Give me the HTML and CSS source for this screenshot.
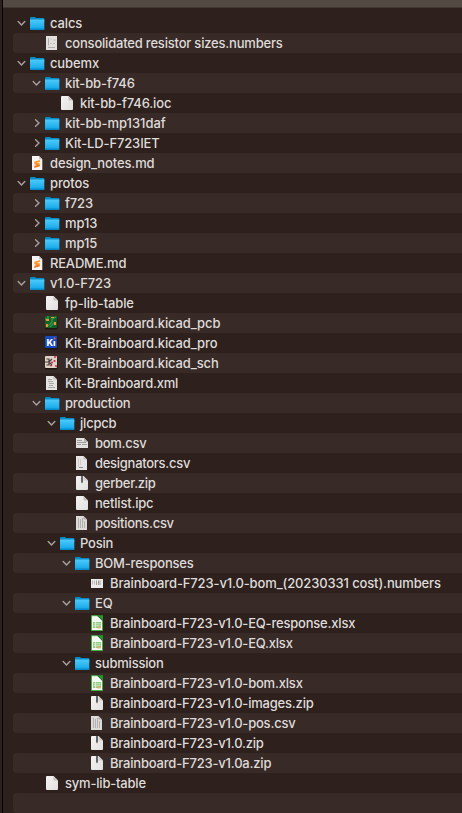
FILE: index.html
```html
<!DOCTYPE html>
<html lang="en">
<head>
<meta charset="utf-8">
<title>Files</title>
<link rel="stylesheet" href="styles.css">
</head>
<body>
<svg class="defs" width="0" height="0" aria-hidden="true">
  <defs>
    <linearGradient id="blue" x1="0" y1="0" x2="0" y2="1"><stop offset="0" stop-color="#4dcafb"/><stop offset="1" stop-color="#0fa5e9"/></linearGradient>
    <linearGradient id="paper" x1="0" y1="0" x2="1" y2="1"><stop offset="0" stop-color="#f4f3f2"/><stop offset="1" stop-color="#e2e1e0"/></linearGradient>
    <symbol id="open" viewBox="0 0 9 8"><path d="M1.2 2.5L4.5 6L7.8 2.5" fill="none" stroke="#a69e9b" stroke-width="1.5" stroke-linecap="round" stroke-linejoin="round"/></symbol>
    <symbol id="closed" viewBox="0 0 9 8"><path d="M3.6 .8L7 4L3.6 7.2" fill="none" stroke="#a69e9b" stroke-width="1.5" stroke-linecap="round" stroke-linejoin="round"/></symbol>
    <symbol id="folder" viewBox="0 0 15 16"><path d="M0 3Q0 2 1 2H5L6.2 3H13.5Q14.3 3 14.3 4V7H0Z" fill="#078bc5"/><path d="M0 4.5H14.3V14Q14.3 15 13.5 15H1Q0 15 0 14Z" fill="url(#blue)"/><path d="M0 13.6H14.3V14Q14.3 15 13.5 15H1Q0 15 0 14Z" fill="#078cc9"/></symbol>
    <symbol id="file" viewBox="0 0 15 16"><path d="M2 2Q2 1 3 1H9.5L14 5.5V14Q14 15 13 15H3Q2 15 2 14Z" fill="url(#paper)"/><path d="M9.5 1V4.5Q9.5 5.5 10.5 5.5H14Z" fill="#c3c1c0"/></symbol>
    <symbol id="md" viewBox="0 0 15 16"><path d="M2 1H9L12.3 4.3V15H2Z" fill="#f5f4f3"/><path d="M9 1V4.3H12.3Z" fill="#c6c3c1"/><path d="M9.9 5L4.3 6.8V9.2L9.9 11V8.6L7 7.8L9.9 7Z" fill="#ff982c"/><path d="M4.3 8.6L9.9 10.4V11.2L4.3 13V10.8L7.2 10Z" fill="#ed761a"/></symbol>
    <symbol id="sheet" viewBox="0 0 15 16"><path d="M1 1H12V15H1Z" fill="#e3e1df"/><path d="M3.5 3V10.5M8.5 5H10.5M8.5 8.5H10M3 12.5H10" stroke="#b0aca9" fill="none"/><path d="M5 4H7M5 8.5H7" stroke="#c6c2bf"/></symbol>
    <symbol id="pcb" viewBox="0 0 15 16"><rect y="2" width="12.5" height="12.5" rx="1" fill="#1e1613"/><rect y="1" width="12" height="12" rx="1" fill="#12602b"/><path d="M0 4H3V1M5 12L10 7M3 11L7 7V4L11 2" fill="none" stroke="#32933f" stroke-width="1.5"/><path d="M1 4H4V6H1ZM1 9H3V12H1ZM9 7H11V10H9ZM6 2H9V3H6Z" fill="#ef942c"/></symbol>
    <symbol id="pro" viewBox="0 0 15 16"><rect y="2" width="12.5" height="12.5" rx="1" fill="#1e1613"/><rect y="1" width="12" height="12" rx="1" fill="#164bc0"/><text class="badge" x="1.6" y="10.8">Kı</text><circle cx="9.6" cy="3.6" r="1" fill="#ef5445"/></symbol>
    <symbol id="sch" viewBox="0 0 15 16"><rect y="2" width="12.5" height="12.5" rx="1" fill="#1e1613"/><rect y="1" width="12" height="12" rx="1" fill="#ded1c5"/><path d="M0 7H4M1.5 4H4V10H1.5M4 7L7 4M4 7L7 10" stroke="#484242" stroke-width="1.2" fill="none"/><path d="M9 2H11M6 7.5H8M9.5 5V7M5 10.5H7M10 11H12" stroke="#d02b50" stroke-width="1.7" fill="none"/></symbol>
    <symbol id="lines" viewBox="0 0 15 16"><path d="M1 1H8.5L12 4.5V15H1Z" fill="#e6e4e2"/><path d="M8.5 1V4.5H12Z" fill="#c6c2bf"/><path d="M3 4.5H7M3 6.5H8M4 8.5H9M4 10.5H8M3 12.5H10" stroke="#aaa6a3"/></symbol>
    <symbol id="bom" viewBox="0 0 15 16"><path d="M1 3H9L13 7V13H1Z" fill="#e3e1df"/><path d="M9 3V7H13Z" fill="#b9b5b2"/><path d="M2 5.5H7M2 7.5H11M2 9.5H6M7 9.5H12" stroke="#a29e9b"/></symbol>
    <symbol id="csv" viewBox="0 0 15 16"><path d="M1 1H8.5L12 4.5V15H1Z" fill="#e8e6e4"/><path d="M8.5 1V4.5H12Z" fill="#c1bdba"/><path d="M3.5 3V12M5.5 4V10" stroke="#d0ccc9"/><path d="M4 12.5H8" stroke="#8f8b88"/></symbol>
    <symbol id="pos" viewBox="0 0 15 16"><path d="M1 1H8.5L12 4.5V15H1Z" fill="#dddbd8"/><path d="M8.5 1V4.5H12Z" fill="#b4b0ad"/><path d="M3.5 3V13M5.5 4V13M7.5 3V13M9.5 6V13" stroke="#aaa6a3" stroke-width=".8"/></symbol>
    <symbol id="zip" viewBox="0 0 15 16"><path d="M1 2Q1 1 2 1H8.5L13 5.5V14Q13 15 12 15H2Q1 15 1 14Z" fill="url(#paper)"/><path d="M8.5 1V5.5H13Z" fill="#cfcdcc"/><path d="M6 1H8V7L7 8.5L6 7Z" fill="#62666a"/></symbol>
    <symbol id="numbers" viewBox="0 0 15 16"><path d="M1 4H13V13H1Z" fill="#eceaea"/><path d="M2.5 5.5V9.5M4.5 5.5V9.5" stroke="#c0bbb8"/><path d="M6.5 5.5V10M8.5 5.5V10M10 5.5V10" stroke="#a49e9b"/></symbol>
    <symbol id="xlsx" viewBox="0 0 15 16"><path d="M1.5 .7H8L12.5 5.2V15.5H1.5Z" fill="#f4fbf2" stroke="#49ac43"/><path d="M7.5 .2H13V5.7Z" fill="#239a29"/><path d="M7.5 .2V1L12.2 5.7H13Z" fill="#1d3e20"/><path d="M3 7H11V13H3Z" fill="#8ccd7c"/><path d="M3.5 8.8H10.5M3.5 10.8H10.5M5.5 7V13" stroke="#def3d8" stroke-width=".8"/><path d="M7.5 11H10.5V13.5H7.5Z" fill="#e4aa80"/></symbol>
  </defs>
</svg>
<main class="window">
<header class="bar"></header>
<ul class="tree">
<li class="row l0"><svg class="arrow"><use href="#open"/></svg><svg class="icon"><use href="#folder"/></svg><span>calcs</span></li>
<li class="row l1"><svg class="arrow"></svg><svg class="icon"><use href="#sheet"/></svg><span class="snug">consolidated resistor sizes.numbers</span></li>
<li class="row l0"><svg class="arrow"><use href="#open"/></svg><svg class="icon"><use href="#folder"/></svg><span>cubemx</span></li>
<li class="row l1"><svg class="arrow"><use href="#open"/></svg><svg class="icon"><use href="#folder"/></svg><span>kit-bb-f746</span></li>
<li class="row l2"><svg class="arrow"></svg><svg class="icon shift"><use href="#file"/></svg><span>kit-bb-f746.ioc</span></li>
<li class="row l1"><svg class="arrow"><use href="#closed"/></svg><svg class="icon"><use href="#folder"/></svg><span class="wide">kit-bb-mp131daf</span></li>
<li class="row l1"><svg class="arrow"><use href="#closed"/></svg><svg class="icon"><use href="#folder"/></svg><span>Kit-LD-F723IET</span></li>
<li class="row l0"><svg class="arrow"></svg><svg class="icon"><use href="#md"/></svg><span>design_notes.md</span></li>
<li class="row l0"><svg class="arrow"><use href="#open"/></svg><svg class="icon"><use href="#folder"/></svg><span>protos</span></li>
<li class="row l1"><svg class="arrow"><use href="#closed"/></svg><svg class="icon"><use href="#folder"/></svg><span>f723</span></li>
<li class="row l1"><svg class="arrow"><use href="#closed"/></svg><svg class="icon"><use href="#folder"/></svg><span>mp13</span></li>
<li class="row l1"><svg class="arrow"><use href="#closed"/></svg><svg class="icon"><use href="#folder"/></svg><span>mp15</span></li>
<li class="row l0"><svg class="arrow"></svg><svg class="icon"><use href="#md"/></svg><span class="snug">README.md</span></li>
<li class="row l0"><svg class="arrow"><use href="#open"/></svg><svg class="icon"><use href="#folder"/></svg><span>v1.0-F723</span></li>
<li class="row l1"><svg class="arrow"></svg><svg class="icon shift"><use href="#file"/></svg><span>fp-lib-table</span></li>
<li class="row l1"><svg class="arrow"></svg><svg class="icon"><use href="#pcb"/></svg><span>Kit-Brainboard.kicad_pcb</span></li>
<li class="row l1"><svg class="arrow"></svg><svg class="icon"><use href="#pro"/></svg><span>Kit-Brainboard.kicad_pro</span></li>
<li class="row l1"><svg class="arrow"></svg><svg class="icon"><use href="#sch"/></svg><span>Kit-Brainboard.kicad_sch</span></li>
<li class="row l1"><svg class="arrow"></svg><svg class="icon"><use href="#lines"/></svg><span class="snug">Kit-Brainboard.xml</span></li>
<li class="row l1"><svg class="arrow"><use href="#open"/></svg><svg class="icon"><use href="#folder"/></svg><span class="snug">production</span></li>
<li class="row l2"><svg class="arrow"><use href="#open"/></svg><svg class="icon"><use href="#folder"/></svg><span class="snug">jlcpcb</span></li>
<li class="row l3"><svg class="arrow"></svg><svg class="icon"><use href="#bom"/></svg><span class="tight">bom.csv</span></li>
<li class="row l3"><svg class="arrow"></svg><svg class="icon"><use href="#csv"/></svg><span class="tight">designators.csv</span></li>
<li class="row l3"><svg class="arrow"></svg><svg class="icon"><use href="#zip"/></svg><span class="tight">gerber.zip</span></li>
<li class="row l3"><svg class="arrow"></svg><svg class="icon shift"><use href="#file"/></svg><span class="snug">netlist.ipc</span></li>
<li class="row l3"><svg class="arrow"></svg><svg class="icon"><use href="#pos"/></svg><span class="tight">positions.csv</span></li>
<li class="row l2"><svg class="arrow"><use href="#open"/></svg><svg class="icon"><use href="#folder"/></svg><span class="snug">Posin</span></li>
<li class="row l3"><svg class="arrow"><use href="#open"/></svg><svg class="icon"><use href="#folder"/></svg><span class="snug">BOM-responses</span></li>
<li class="row l4"><svg class="arrow"></svg><svg class="icon"><use href="#numbers"/></svg><span>Brainboard-F723-v1.0-bom_(20230331 cost).numbers</span></li>
<li class="row l3"><svg class="arrow"><use href="#open"/></svg><svg class="icon"><use href="#folder"/></svg><span>EQ</span></li>
<li class="row l4"><svg class="arrow"></svg><svg class="icon"><use href="#xlsx"/></svg><span class="snug">Brainboard-F723-v1.0-EQ-response.xlsx</span></li>
<li class="row l4"><svg class="arrow"></svg><svg class="icon"><use href="#xlsx"/></svg><span class="snug">Brainboard-F723-v1.0-EQ.xlsx</span></li>
<li class="row l3"><svg class="arrow"><use href="#open"/></svg><svg class="icon"><use href="#folder"/></svg><span class="snug">submission</span></li>
<li class="row l4"><svg class="arrow"></svg><svg class="icon"><use href="#xlsx"/></svg><span class="snug">Brainboard-F723-v1.0-bom.xlsx</span></li>
<li class="row l4"><svg class="arrow"></svg><svg class="icon"><use href="#zip"/></svg><span class="snug">Brainboard-F723-v1.0-images.zip</span></li>
<li class="row l4"><svg class="arrow"></svg><svg class="icon"><use href="#pos"/></svg><span class="snug">Brainboard-F723-v1.0-pos.csv</span></li>
<li class="row l4"><svg class="arrow"></svg><svg class="icon"><use href="#zip"/></svg><span class="snug">Brainboard-F723-v1.0.zip</span></li>
<li class="row l4"><svg class="arrow"></svg><svg class="icon"><use href="#zip"/></svg><span class="snug">Brainboard-F723-v1.0a.zip</span></li>
<li class="row l1"><svg class="arrow"></svg><svg class="icon shift"><use href="#file"/></svg><span class="snug">sym-lib-table</span></li>
<li class="row"></li>
</ul>
</main>
</body>
</html>
```
FILE: styles.css
```css
* { box-sizing: border-box; }
body { margin: 0; background: #2d201d; overflow: hidden; }
.defs { display: block; height: 0; }
.window {
  height: 813px;
  margin-left: 2px;
  border-left: 1px solid #070404;
  background: #2d201d;
}
.bar { height: 8px; background: #534a44; border-bottom: 1px solid #423833; }
.tree { margin: 0; padding: 5px 0 0 10px; list-style: none; }
.row {
  --level: 0;
  display: flex;
  align-items: center;
  height: 20px;
  padding-left: calc(4px + var(--level) * 15px);
  border-radius: 4px 0 0 4px;
  color: #dfdbd9;
  font: 500 13px/20px Inter, "Liberation Sans", sans-serif;
  letter-spacing: -0.13px;
  white-space: nowrap;
}
.row:nth-child(even) { background: #382a27; }
.l1 { --level: 1; }
.l2 { --level: 2; }
.l3 { --level: 3; }
.l4 { --level: 4; }
.wide { letter-spacing: -0.04px; }
.snug { letter-spacing: -0.2px; }
.tight { letter-spacing: -0.28px; }
.arrow { flex: none; width: 9px; height: 8px; margin-right: 4px; }
.icon { flex: none; width: 15px; height: 16px; margin-right: 5px; }
.shift { transform: translateX(-1px); }
.badge { font: 800 9px Inter, sans-serif; letter-spacing: -0.2px; fill: #fff; }
```
